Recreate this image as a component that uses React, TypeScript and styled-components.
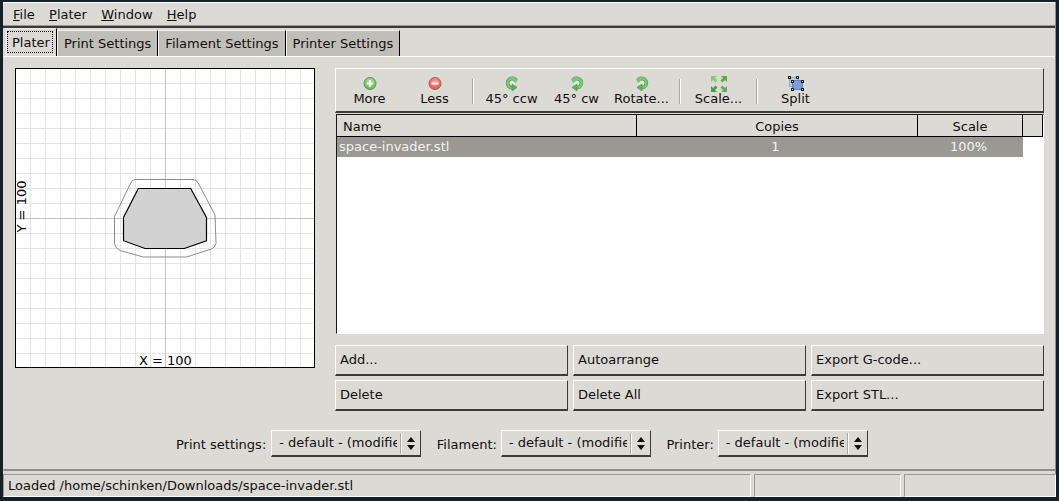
import React from "react";
import styled, { createGlobalStyle } from "styled-components";

const GlobalStyle = createGlobalStyle`
  html, body {
    margin: 0;
    padding: 0;
    height: 100%;
    background: #15202b;
    overflow: hidden;
  }
  #root {
    height: 100%;
  }
`;

const gridStops = Array.from({ length: 20 }, (_, i) => i * 15 - 1).filter((v) => v > 0);

const PlusIcon = () => (
  <svg width="16" height="16" viewBox="0 0 16 16">
    <defs>
      <radialGradient id="greenBall" cx="50%" cy="35%" r="70%">
        <stop offset="0%" stopColor="#b6e29c" />
        <stop offset="100%" stopColor="#5fae4c" />
      </radialGradient>
    </defs>
    <circle cx="8" cy="7.5" r="6" fill="url(#greenBall)" stroke="#5c9a4e" />
    <path d="M8 4.3v6.4M4.8 7.5h6.4" stroke="#fff" strokeWidth="2" />
  </svg>
);

const MinusIcon = () => (
  <svg width="16" height="16" viewBox="0 0 16 16">
    <defs>
      <radialGradient id="redBall" cx="50%" cy="35%" r="70%">
        <stop offset="0%" stopColor="#f3a59c" />
        <stop offset="100%" stopColor="#d9534a" />
      </radialGradient>
    </defs>
    <circle cx="8" cy="7.5" r="6" fill="url(#redBall)" stroke="#b9544b" />
    <path d="M4.5 7.5h7" stroke="#fff" strokeWidth="2" />
  </svg>
);

// drawn as the ccw arrow, mirrored for the cw ones
const RotateIcon = ({ ccw }: { ccw?: boolean }) => (
  <svg width="16" height="16" viewBox="0 0 16 16">
    <g transform={ccw ? undefined : "translate(16 0) scale(-1 1)"}>
      <circle cx="8" cy="7" r="3" fill="#e3efdd" />
      <path d="M12.2 4.6 A4.6 4.6 0 1 0 8.4 11.6" fill="none" stroke="#4f9a4e" strokeWidth="3.6" />
      <path d="M8 1 L7 4 L12 7 L14 3 Z" fill="#7cc678" />
      <path d="M12.2 4.6 A4.6 4.6 0 1 0 8.4 11.6" fill="none" stroke="#7cc678" strokeWidth="2.4" />
      <path d="M8 8 L8 15 L13 11.4 Z" fill="#62ad60" stroke="#4f9a4e" strokeWidth="0.7" />
      <path d="M11.5 7.2 L15 7.2 L15 9 L12 9 Z" fill="#dcdad5" />
    </g>
  </svg>
);

const ScaleIcon = () => (
  <svg width="18" height="18" viewBox="0 0 18 18">
    <path d="M1 1h6l-2 2 2.5 2.5-2 2L3 5 1 7z" fill="#8fc77f" />
    <path d="M17 1h-6l2 2-2.5 2.5 2 2L15 5l2 2z" fill="#5ea94e" />
    <path d="M1 17h6l-2-2 2.5-2.5-2-2L3 13l-2-2z" fill="#4f9a42" />
    <path d="M17 17h-6l2-2-2.5-2.5 2-2L15 13l2-2z" fill="#6aa85c" />
  </svg>
);

const SplitIcon = () => (
  <svg width="18" height="18" viewBox="0 0 18 18">
    <rect x="2.5" y="2.5" width="9" height="9" fill="#b9c9e8" stroke="#8fa6d2" />
    <rect x="5.5" y="5.5" width="10" height="9" fill="#7c9ddc" stroke="#5f82c6" />
    <g fill="#fff" stroke="#222" strokeWidth="1">
      <rect x="1.5" y="1.5" width="2" height="2" />
      <rect x="9.5" y="1.5" width="2" height="2" />
      <rect x="4.5" y="5.5" width="2" height="2" />
      <rect x="14.5" y="5.5" width="2" height="2" />
      <rect x="4.5" y="13.5" width="2" height="2" />
      <rect x="14.5" y="13.5" width="2" height="2" />
    </g>
  </svg>
);

const BedDrawing = () => (
  <svg width="298" height="298" viewBox="0 0 298 298">
    <rect width="298" height="298" fill="#fff" />
    {gridStops.map((v) => (
      <g key={v} stroke="#e4e4e4">
        <line x1={v + 0.5} y1="0" x2={v + 0.5} y2="298" />
        <line x1="0" y1={v + 0.5} x2="298" y2={v + 0.5} />
      </g>
    ))}
    <line x1="149.5" y1="0" x2="149.5" y2="298" stroke="#c4c4c4" />
    <line x1="0" y1="149.5" x2="298" y2="149.5" stroke="#c4c4c4" />
    <path
      d="M119 110.5 L177 110.5 Q180.5 110.5 182.5 114.5 L199 146 L200 174.5 Q199 178.5 195.5 180 L170.5 188 L127.5 188 L104 181.5 Q99 179 98.5 174.5 L98.5 147.5 L114.5 114.5 Q116 110.5 119 110.5 Z"
      fill="none"
      stroke="#8c8c8c"
    />
    <path
      d="M122.3 119.5 L174.7 119.5 L190.5 148.5 L190.5 171.7 L168.3 179.5 L129 179.5 L107.5 171.7 L107.5 148.5 Z"
      fill="#d2d2d2"
      stroke="#000"
      strokeWidth="1.2"
    />
  </svg>
);

const tools = [
  { kind: "tool", label: "More", icon: <PlusIcon /> },
  { kind: "tool", label: "Less", icon: <MinusIcon /> },
  { kind: "sep" },
  { kind: "tool", label: "45° ccw", icon: <RotateIcon ccw /> },
  { kind: "tool", label: "45° cw", icon: <RotateIcon /> },
  { kind: "tool", label: "Rotate...", icon: <RotateIcon /> },
  { kind: "sep" },
  { kind: "tool", label: "Scale...", icon: <ScaleIcon /> },
  { kind: "sep" },
  { kind: "tool", label: "Split", icon: <SplitIcon /> },
];

const actions = ["Add...", "Autoarrange", "Export G-code...", "Delete", "Delete All", "Export STL..."];

const App: React.FC = () => {
  return (
    <>
      <GlobalStyle />
      <Window>
        <MenuBar>
          {["File", "Plater", "Window", "Help"].map((m) => (
            <MenuItem key={m}>
              <u>{m[0]}</u>
              {m.slice(1)}
            </MenuItem>
          ))}
        </MenuBar>
        <TabStrip>
          <Tab $active>
            <FocusRing>Plater</FocusRing>
          </Tab>
          <Tab>Print Settings</Tab>
          <Tab>Filament Settings</Tab>
          <Tab>Printer Settings</Tab>
        </TabStrip>
        <Page>
          <TopArea>
            <Canvas>
              <BedDrawing />
              <XLabel>X = 100</XLabel>
              <YLabel>Y = 100</YLabel>
            </Canvas>
            <RightColumn>
              <Toolbar>
                {tools.map((t, i) =>
                  t.kind === "sep" ? (
                    <ToolSep key={i} />
                  ) : (
                    <ToolButton key={i}>
                      <ToolIcon>{t.icon}</ToolIcon>
                      {t.label}
                    </ToolButton>
                  )
                )}
              </Toolbar>
              <ListBox>
                <ListHead>
                  <HeadCell $w={300}>Name</HeadCell>
                  <HeadCell $w={281} $center>Copies</HeadCell>
                  <HeadCell $w={105} $center>Scale</HeadCell>
                  <HeadFill />
                </ListHead>
                <ListRow>
                  <RowCell $w={300}>space-invader.stl</RowCell>
                  <RowCell $w={281} $center>1</RowCell>
                  <RowCell $w={105} $center>100%</RowCell>
                </ListRow>
              </ListBox>
              <ActionGrid>
                {actions.map((a) => (
                  <ActionButton key={a}>{a}</ActionButton>
                ))}
              </ActionGrid>
            </RightColumn>
          </TopArea>
          <ChoiceRow>
            <ChoiceLabel>Print settings:</ChoiceLabel>
            <Choice>
              <ChoiceText>- default - (modified)</ChoiceText>
              <ChoiceSep />
              <Arrows />
            </Choice>
            <ChoiceLabel $lead>Filament:</ChoiceLabel>
            <Choice>
              <ChoiceText>- default - (modified)</ChoiceText>
              <ChoiceSep />
              <Arrows />
            </Choice>
            <ChoiceLabel $lead>Printer:</ChoiceLabel>
            <Choice>
              <ChoiceText>- default - (modified)</ChoiceText>
              <ChoiceSep />
              <Arrows />
            </Choice>
          </ChoiceRow>
        </Page>
        <StatusBar>
          <StatusPanel $w={748}>Loaded /home/schinken/Downloads/space-invader.stl</StatusPanel>
          <StatusPanel $w={147} />
          <StatusPanel $w={152} />
        </StatusBar>
      </Window>
    </>
  );
};

const Window = styled.div`
  box-sizing: border-box;
  width: 1053px;
  height: 495px;
  margin: 2px 0 0 3px;
  background: #dcdad5;
  font-family: "DejaVu Sans", sans-serif;
  font-size: 13px;
  color: #101010;
  display: flex;
  flex-direction: column;
  border-right: 1px solid #8f8d88;
`;

const MenuBar = styled.div`
  box-sizing: border-box;
  height: 26px;
  display: flex;
  align-items: center;
  padding: 1px 0 0 10px;
  gap: 14.3px;
  border-top: 1px solid #fff;
  border-bottom: 2px solid #3a3a38;
  box-shadow: inset 0 -1px 0 #9a9892;
`;

const MenuItem = styled.span`
  line-height: 22px;
  u {
    text-underline-offset: 1px;
  }
`;

const TabStrip = styled.div`
  height: 29px;
  display: flex;
  align-items: flex-end;
  padding-left: 3px;
`;

const Tab = styled.div<{ $active?: boolean }>`
  box-sizing: border-box;
  height: ${(p) => (p.$active ? 29 : 27)}px;
  display: flex;
  align-items: ${(p) => (p.$active ? "flex-start" : "center")};
  justify-content: ${(p) => (p.$active ? "flex-start" : "center")};
  padding: ${(p) => (p.$active ? "2px 0 0" : "0 6px")};
  background: ${(p) => (p.$active ? "#dcdad5" : "#c0beb8")};
  border-top: 1px solid #f2f1ee;
  border-left: 1px solid #f2f1ee;
  border-right: 1px solid #000;
  ${(p) => (p.$active ? "width: 51px;" : "border-bottom: 1px solid #fff;")}
`;

const FocusRing = styled.span`
  border: 1px dotted #000;
  line-height: 15px;
  padding: 3px 2px 2px 4px;
`;

const Page = styled.div`
  box-sizing: border-box;
  height: 415px;
  border-top: 1px solid #fff;
  margin-top: -1px;
  padding: 11px 11px 0 11px;
  border-bottom: 2px solid #8f8d88;
  border-left: 1px solid #dcdad5;
`;

const TopArea = styled.div`
  display: flex;
  gap: 20px;
`;

const Canvas = styled.div`
  position: relative;
  width: 298px;
  height: 298px;
  border: 1px solid #000;
  flex: none;
  svg {
    display: block;
  }
`;

const XLabel = styled.span`
  position: absolute;
  left: 123px;
  bottom: -1px;
  line-height: 15px;
  color: #000;
`;

const YLabel = styled.span`
  position: absolute;
  left: -21px;
  top: 130px;
  line-height: 15px;
  color: #000;
  transform: rotate(-90deg);
  width: 52px;
  text-align: center;
  white-space: nowrap;
`;

const RightColumn = styled.div`
  width: 709px;
  display: flex;
  flex-direction: column;
`;

const Toolbar = styled.div`
  box-sizing: border-box;
  height: 45px;
  display: flex;
  padding: 0 0 0 1px;
  border-top: 1px solid #fff;
  border-left: 1px solid #fff;
  border-right: 1px solid #3a3a38;
  border-bottom: 2px solid #3a3a38;
`;

const ToolButton = styled.div`
  width: 65px;
  flex: none;
  display: flex;
  flex-direction: column;
  align-items: center;
  padding-top: 7px;
  line-height: 15px;
`;

const ToolIcon = styled.span`
  height: 16px;
  margin-bottom: -1px;
  display: flex;
  align-items: center;
  justify-content: center;
`;

const ToolSep = styled.div`
  width: 2px;
  height: 25px;
  margin: 10px 5px 0;
  flex: none;
  background: #fff;
  border-left: 1px solid #a9a7a1;
  box-sizing: border-box;
`;

const ListBox = styled.div`
  box-sizing: border-box;
  height: 220px;
  background: #fff;
  border: 1px solid #1a1a18;
  border-bottom-color: #fff;
  border-right-color: #fff;
  margin: 1px 0 1px 1px;
`;

const ListHead = styled.div`
  display: flex;
  height: 22px;
  box-sizing: border-box;
`;

const HeadCell = styled.div<{ $w: number; $center?: boolean }>`
  box-sizing: border-box;
  width: ${(p) => p.$w}px;
  flex: none;
  background: #dcdad5;
  border-right: 1px solid #000;
  border-bottom: 1px solid #000;
  line-height: 23px;
  padding-left: ${(p) => (p.$center ? 0 : 6)}px;
  text-align: ${(p) => (p.$center ? "center" : "left")};
`;

const HeadFill = styled.div`
  flex: 1;
  background: #dcdad5;
  border-right: 1px solid #000;
  border-bottom: 1px solid #000;
`;

const ListRow = styled.div`
  display: flex;
  width: 686px;
  height: 20px;
  background: #9a9892;
  color: #f4f3f0;
  line-height: 19px;
`;

const RowCell = styled.div<{ $w: number; $center?: boolean }>`
  box-sizing: border-box;
  width: ${(p) => p.$w}px;
  flex: none;
  padding: 0 ${(p) => (p.$center ? "4px" : "0")} 0 ${(p) => (p.$center ? 0 : 2)}px;
  text-align: ${(p) => (p.$center ? "center" : "left")};
`;

const ActionGrid = styled.div`
  display: grid;
  grid-template-columns: repeat(3, 233px);
  grid-auto-rows: 31px;
  column-gap: 5px;
  row-gap: 4px;
  margin-top: 10px;
`;

const ActionButton = styled.div`
  box-sizing: border-box;
  background: #dcdad5;
  border-top: 1px solid #fff;
  border-left: 1px solid #fff;
  border-right: 1px solid #3a3a38;
  border-bottom: 2px solid #3a3a38;
  line-height: 27px;
  padding-left: 4px;
`;

const ChoiceRow = styled.div`
  display: flex;
  align-items: center;
  margin-top: 19px;
  margin-left: 161px;
`;

const ChoiceLabel = styled.span<{ $lead?: boolean }>`
  margin-left: ${(p) => (p.$lead ? 15.5 : 0)}px;
  margin-right: ${(p) => (p.$lead ? 4 : 5)}px;
  padding-top: 2px;
  white-space: nowrap;
`;

const Choice = styled.div`
  box-sizing: border-box;
  width: 150px;
  height: 27px;
  display: flex;
  align-items: center;
  border-top: 1px solid #fff;
  border-left: 1px solid #fff;
  border-right: 1px solid #3a3a38;
  border-bottom: 2px solid #3a3a38;
  padding-left: 7px;
`;

const ChoiceText = styled.span`
  width: 118px;
  overflow: hidden;
  white-space: nowrap;
  flex: none;
  padding-bottom: 2px;
`;

const ChoiceSep = styled.span`
  width: 1px;
  height: 21px;
  margin-left: 3px;
  background: #fff;
  border-left: 1px solid #a9a7a1;
  flex: none;
`;

const Arrows = styled.span`
  margin-left: 5px;
  display: flex;
  flex-direction: column;
  gap: 3px;
  &::before,
  &::after {
    content: "";
    width: 0;
    height: 0;
    border-left: 4px solid transparent;
    border-right: 4px solid transparent;
  }
  &::before {
    border-bottom: 5px solid #101010;
  }
  &::after {
    border-top: 5px solid #101010;
  }
`;

const StatusBar = styled.div`
  display: flex;
  gap: 3px;
  height: 23px;
  margin-top: 3px;
`;

const StatusPanel = styled.div<{ $w: number }>`
  box-sizing: border-box;
  width: ${(p) => p.$w}px;
  flex: none;
  border-top: 1px solid #9a9892;
  border-left: 1px solid #9a9892;
  border-right: 1px solid #fff;
  border-bottom: 1px solid #fff;
  line-height: 21px;
  padding-left: 4px;
`;

export default App;
